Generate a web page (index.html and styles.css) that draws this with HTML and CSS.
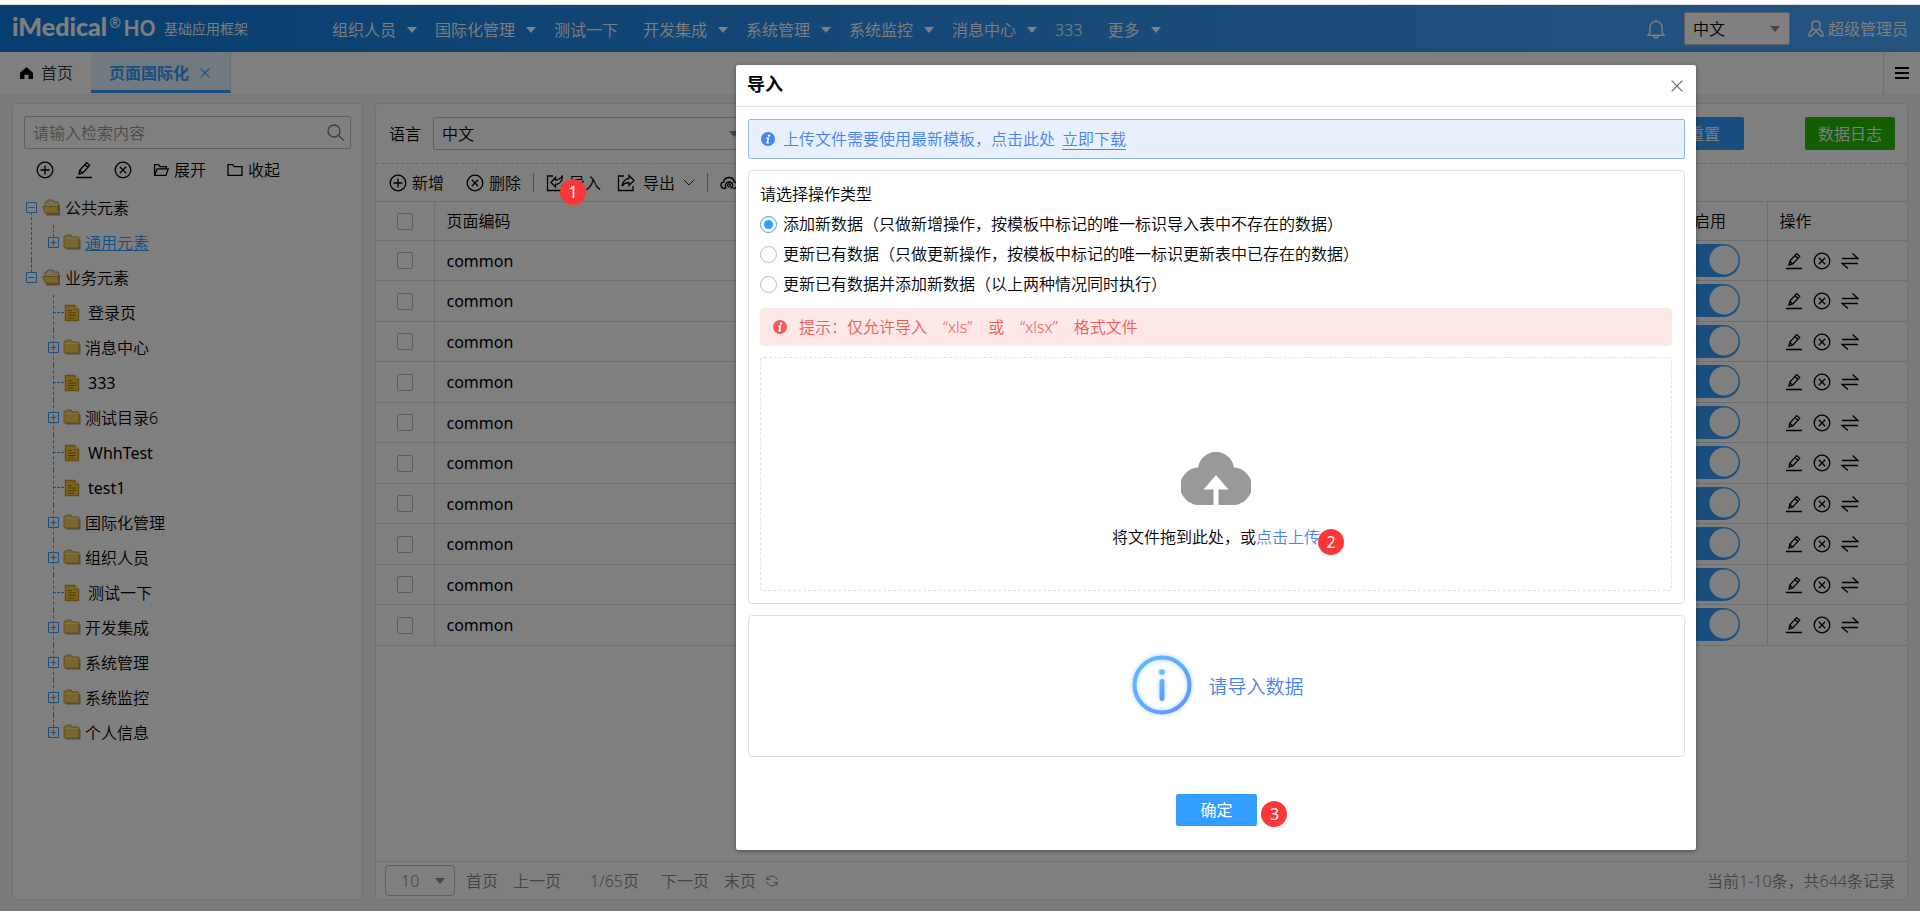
FILE: index.html
```html
<!DOCTYPE html>
<html lang="zh-CN">
<head>
<meta charset="utf-8">
<title>页面国际化</title>
<link rel="stylesheet" href="styles.css">
</head>
<body>
<svg class="sprite" aria-hidden="true">
  <symbol id="add" viewBox="0 0 18 18"><circle cx="9" cy="9" r="7.8"/><path d="M9 4.5v9M4.5 9h9"/></symbol>
  <symbol id="edit" viewBox="0 0 18 18"><path d="M1 16.5h16M4 13l.7-3.8L11.6 1.6l3.1 2.8-6.9 7.6L4 13zM9.8 3.6l3.1 2.8M4.7 9.2l3.1 2.8"/></symbol>
  <symbol id="del" viewBox="0 0 18 18"><circle cx="9" cy="9" r="7.8"/><path d="M5.8 5.8l6.4 6.4M12.2 5.8l-6.4 6.4"/></symbol>
  <symbol id="swap" viewBox="0 0 18 18"><path d="M1 6.5h16l-5.5-5M17 11.5H1l6 5"/></symbol>
  <symbol id="open" viewBox="0 0 16 16"><path d="M1.6 13.4V2.6h4l1.4 2h6.4v2.2M1.6 13.4l2.6-6.6h11l-2.2 6.6H1.6z"/></symbol>
  <symbol id="closed" viewBox="0 0 16 16"><path d="M1 2.6h4.6l1.6 2H15v8.8H1z"/></symbol>
  <symbol id="plus" viewBox="0 0 11 11"><path d="M.5.5h10v10H.5zM2.5 5.5h6M5.5 2.5v6"/></symbol>
  <symbol id="minus" viewBox="0 0 11 11"><path d="M.5.5h10v10H.5zM2.5 5.5h6"/></symbol>
  <symbol id="folder" viewBox="0 0 18 17"><path d="M3 14.5h13.5v-9" fill="none" stroke="#a89878" stroke-width="2"/><path d="M1 4.5V3q0-1 1-1h1l1-1h4l1.500 2H15q1 0 1 1v9q0 1-1 1H2q-1 0-1-1z" fill="#f2ce5c" stroke="#c49a3c"/><path d="M2 4.500h13" stroke="#ffe69a"/></symbol>
  <symbol id="folder-open" viewBox="0 0 19 17"><path d="M4 15.500h13V6" fill="none" stroke="#a89878" stroke-width="2"/><path d="M3 13V4q0-1 1-1h1l1-2h5l1 2h3.500q1 0 1 1v10H4z" fill="#efe0b0" stroke="#b3924a"/><path d="M.8 7.500h14.700l1.200 6.500H3z" fill="#f2ce5c" stroke="#c49a3c"/></symbol>
  <symbol id="file" viewBox="0 0 16 18"><path d="M1.500 1.500h9l4 4v11h-13z" fill="#f5c93e" stroke="#cf9b1e" stroke-width="1.400"/><path d="M10.500 1.500v4h4" fill="#fff0b8" stroke="#cf9b1e"/><path d="M4 6.500h4M4 9h8M4 11.500h8M4 14h6" stroke="#a87800"/></symbol>
  <symbol id="info" viewBox="0 0 14 14"><circle cx="7" cy="7" r="7" fill="currentColor"/><circle cx="8.100" cy="3.600" r="1.200" fill="#fff"/><path d="M5.300 6.300h2L6.300 10.800h1.500" fill="none" stroke="#fff" stroke-width="1.500"/></symbol>
  <symbol id="in" viewBox="0 0 18 18"><path d="M7 2H1.500v14.500h14.500V11"/><path d="M5 8.500L9.500 3.500v2.700q4.500-.4 7-4.700-.2 8.500-7 9v2.500z"/></symbol>
  <symbol id="out" viewBox="0 0 18 18"><path d="M7 2H1.500v14.500h14.500V12"/><path d="M17 6.500L12 1.500V4.300Q6.500 5 5 12q2.800-3.500 7-3.500v3z"/></symbol>
</svg>

<div class="app">
  <header class="topbar">
    <div class="brand"><span class="brand-name">iMedical</span><span class="brand-reg">®</span><span class="brand-ho">HO</span></div>
    <span class="brand-sub">基础应用框架</span>
    <nav class="menu">
      <a href="#" class="has-sub">组织人员</a>
      <a href="#" class="has-sub">国际化管理</a>
      <a href="#">测试一下</a>
      <a href="#" class="has-sub">开发集成</a>
      <a href="#" class="has-sub">系统管理</a>
      <a href="#" class="has-sub">系统监控</a>
      <a href="#" class="has-sub">消息中心</a>
      <a href="#">333</a>
      <a href="#" class="has-sub">更多</a>
    </nav>
    <div class="account">
      <button class="plain" aria-label="通知"><svg class="bell" viewBox="0 0 18 20"><path d="M1 16.200h16c-1.500-1.500-2-3-2-5.200V8.500C15 5 12.500 2.500 9 2.500S3 5 3 8.500V11c0 2.200-.5 3.700-2 5.200zM7 17q0 2 2 2t2-2M9 2.500V.6"/></svg></button>
      <select class="select lang" aria-label="界面语言"><option>中文</option></select>
      <a href="#" class="user"><svg viewBox="0 0 16 17"><path d="M8 .9c2.700 0 4.200 1.800 4.200 4.300S10.500 10 8 10 3.800 7.700 3.800 5.200 5.300.9 8 .9zM5 9.300C2.500 10.300 1.200 12.500 1 16h2.500L8 11l4.500 5H15c-.2-3.500-1.500-5.700-4-6.700"/></svg>超级管理员</a>
    </div>
  </header>

  <div class="tabs">
    <a href="#" class="tab home"><svg viewBox="0 0 14 13"><path d="M7 0L0 6.300V13h4.800V8.500h4.400V13H14V6.300z"/></svg>首页</a>
    <a href="#" class="tab active">页面国际化<svg viewBox="0 0 10 10"><path d="M.7.7l8.600 8.600M9.300.7L.7 9.300"/></svg></a>
    <button class="plain tab-menu" aria-label="标签菜单"><svg viewBox="0 0 14 12"><path d="M0 1h14M0 6h14M0 11h14"/></svg></button>
  </div>

  <main class="workspace">
    <aside class="panel side">
      <div class="search">
        <input type="text" placeholder="请输入检索内容" aria-label="检索内容">
        <svg viewBox="0 0 18 18"><circle cx="7" cy="7" r="6"/><path d="M11.500 11.500l5.500 5"/></svg>
      </div>
      <div class="side-tools">
        <button class="plain" aria-label="新增"><svg class="ic"><use href="#add"/></svg></button>
        <button class="plain" aria-label="编辑"><svg class="ic"><use href="#edit"/></svg></button>
        <button class="plain" aria-label="删除"><svg class="ic"><use href="#del"/></svg></button>
        <button class="plain"><svg class="ic sm"><use href="#open"/></svg>展开</button>
        <button class="plain"><svg class="ic sm"><use href="#closed"/></svg>收起</button>
      </div>
      <ul class="tree">
        <li>
          <div class="node"><svg class="exp"><use href="#minus"/></svg><svg class="fo"><use href="#folder-open"/></svg><span>公共元素</span></div>
          <ul>
            <li><div class="node"><svg class="exp"><use href="#plus"/></svg><svg class="fc"><use href="#folder"/></svg><a href="#">通用元素</a></div></li>
          </ul>
        </li>
        <li>
          <div class="node"><svg class="exp"><use href="#minus"/></svg><svg class="fo"><use href="#folder-open"/></svg><span>业务元素</span></div>
          <ul>
            <li><div class="node leaf"><i></i><svg class="fi"><use href="#file"/></svg><span>登录页</span></div></li>
            <li><div class="node"><svg class="exp"><use href="#plus"/></svg><svg class="fc"><use href="#folder"/></svg><span>消息中心</span></div></li>
            <li><div class="node leaf"><i></i><svg class="fi"><use href="#file"/></svg><span class="latin">333</span></div></li>
            <li><div class="node"><svg class="exp"><use href="#plus"/></svg><svg class="fc"><use href="#folder"/></svg><span>测试目录6</span></div></li>
            <li><div class="node leaf"><i></i><svg class="fi"><use href="#file"/></svg><span class="latin">WhhTest</span></div></li>
            <li><div class="node leaf"><i></i><svg class="fi"><use href="#file"/></svg><span class="latin">test1</span></div></li>
            <li><div class="node"><svg class="exp"><use href="#plus"/></svg><svg class="fc"><use href="#folder"/></svg><span>国际化管理</span></div></li>
            <li><div class="node"><svg class="exp"><use href="#plus"/></svg><svg class="fc"><use href="#folder"/></svg><span>组织人员</span></div></li>
            <li><div class="node leaf"><i></i><svg class="fi"><use href="#file"/></svg><span>测试一下</span></div></li>
            <li><div class="node"><svg class="exp"><use href="#plus"/></svg><svg class="fc"><use href="#folder"/></svg><span>开发集成</span></div></li>
            <li><div class="node"><svg class="exp"><use href="#plus"/></svg><svg class="fc"><use href="#folder"/></svg><span>系统管理</span></div></li>
            <li><div class="node"><svg class="exp"><use href="#plus"/></svg><svg class="fc"><use href="#folder"/></svg><span>系统监控</span></div></li>
            <li><div class="node"><svg class="exp"><use href="#plus"/></svg><svg class="fc"><use href="#folder"/></svg><span>个人信息</span></div></li>
          </ul>
        </li>
      </ul>
    </aside>

    <section class="panel content">
      <div class="query">
        <label for="lang">语言</label>
        <select id="lang" class="select wide"><option>中文</option></select>
        <button class="btn blue reset">重置</button>
        <button class="btn green">数据日志</button>
      </div>
      <div class="tools">
        <button class="plain"><svg class="ic"><use href="#add"/></svg>新增</button>
        <button class="plain"><svg class="ic"><use href="#del"/></svg>删除</button>
        <span class="sep"></span>
        <button class="plain marked"><svg class="ic"><use href="#in"/></svg>导入</button>
        <button class="plain"><svg class="ic"><use href="#out"/></svg>导出<svg class="chev" viewBox="0 0 12 7"><path d="M.7.7L6 6 11.300.7"/></svg></button>
        <span class="sep"></span>
        <button class="plain" aria-label="同步"><svg class="ic" viewBox="0 0 18 18"><path d="M5 14.500H4.500C2.500 14.300 1 13 1 11c0-1.700 1-2.800 2.700-3.100C4.200 4.800 6.300 3.500 9 3.500s4.800 1.300 5.300 4.400C16 8.200 17 9.300 17 11c0 2-1.500 3.300-3.500 3.500M6.300 14.800C5.300 13.500 5 12 5.600 10.500 6.300 8.700 7.600 8 9.200 8c2.200 0 3.500 1.500 3.500 3.200 0 1.500-.8 2.600-2.200 3.300"/><circle cx="9" cy="11.300" r="1.500"/></svg></button>
      </div>
      <table class="grid">
        <colgroup><col class="c-check"><col><col class="c-switch"><col class="c-ops"></colgroup>
        <thead><tr><th><input type="checkbox" aria-label="全选"></th><th>页面编码</th><th>启用</th><th>操作</th></tr></thead>
        <tbody>
          <tr><td><input type="checkbox" aria-label="选择"></td><td>common</td><td><input type="checkbox" class="switch" role="switch" aria-label="启用" checked></td><td><span class="ops"><button class="plain" aria-label="编辑"><svg class="ic"><use href="#edit"/></svg></button><button class="plain" aria-label="删除"><svg class="ic"><use href="#del"/></svg></button><button class="plain" aria-label="转换"><svg class="ic"><use href="#swap"/></svg></button></span></td></tr>
          <tr><td><input type="checkbox" aria-label="选择"></td><td>common</td><td><input type="checkbox" class="switch" role="switch" aria-label="启用" checked></td><td><span class="ops"><button class="plain" aria-label="编辑"><svg class="ic"><use href="#edit"/></svg></button><button class="plain" aria-label="删除"><svg class="ic"><use href="#del"/></svg></button><button class="plain" aria-label="转换"><svg class="ic"><use href="#swap"/></svg></button></span></td></tr>
          <tr><td><input type="checkbox" aria-label="选择"></td><td>common</td><td><input type="checkbox" class="switch" role="switch" aria-label="启用" checked></td><td><span class="ops"><button class="plain" aria-label="编辑"><svg class="ic"><use href="#edit"/></svg></button><button class="plain" aria-label="删除"><svg class="ic"><use href="#del"/></svg></button><button class="plain" aria-label="转换"><svg class="ic"><use href="#swap"/></svg></button></span></td></tr>
          <tr><td><input type="checkbox" aria-label="选择"></td><td>common</td><td><input type="checkbox" class="switch" role="switch" aria-label="启用" checked></td><td><span class="ops"><button class="plain" aria-label="编辑"><svg class="ic"><use href="#edit"/></svg></button><button class="plain" aria-label="删除"><svg class="ic"><use href="#del"/></svg></button><button class="plain" aria-label="转换"><svg class="ic"><use href="#swap"/></svg></button></span></td></tr>
          <tr><td><input type="checkbox" aria-label="选择"></td><td>common</td><td><input type="checkbox" class="switch" role="switch" aria-label="启用" checked></td><td><span class="ops"><button class="plain" aria-label="编辑"><svg class="ic"><use href="#edit"/></svg></button><button class="plain" aria-label="删除"><svg class="ic"><use href="#del"/></svg></button><button class="plain" aria-label="转换"><svg class="ic"><use href="#swap"/></svg></button></span></td></tr>
          <tr><td><input type="checkbox" aria-label="选择"></td><td>common</td><td><input type="checkbox" class="switch" role="switch" aria-label="启用" checked></td><td><span class="ops"><button class="plain" aria-label="编辑"><svg class="ic"><use href="#edit"/></svg></button><button class="plain" aria-label="删除"><svg class="ic"><use href="#del"/></svg></button><button class="plain" aria-label="转换"><svg class="ic"><use href="#swap"/></svg></button></span></td></tr>
          <tr><td><input type="checkbox" aria-label="选择"></td><td>common</td><td><input type="checkbox" class="switch" role="switch" aria-label="启用" checked></td><td><span class="ops"><button class="plain" aria-label="编辑"><svg class="ic"><use href="#edit"/></svg></button><button class="plain" aria-label="删除"><svg class="ic"><use href="#del"/></svg></button><button class="plain" aria-label="转换"><svg class="ic"><use href="#swap"/></svg></button></span></td></tr>
          <tr><td><input type="checkbox" aria-label="选择"></td><td>common</td><td><input type="checkbox" class="switch" role="switch" aria-label="启用" checked></td><td><span class="ops"><button class="plain" aria-label="编辑"><svg class="ic"><use href="#edit"/></svg></button><button class="plain" aria-label="删除"><svg class="ic"><use href="#del"/></svg></button><button class="plain" aria-label="转换"><svg class="ic"><use href="#swap"/></svg></button></span></td></tr>
          <tr><td><input type="checkbox" aria-label="选择"></td><td>common</td><td><input type="checkbox" class="switch" role="switch" aria-label="启用" checked></td><td><span class="ops"><button class="plain" aria-label="编辑"><svg class="ic"><use href="#edit"/></svg></button><button class="plain" aria-label="删除"><svg class="ic"><use href="#del"/></svg></button><button class="plain" aria-label="转换"><svg class="ic"><use href="#swap"/></svg></button></span></td></tr>
          <tr><td><input type="checkbox" aria-label="选择"></td><td>common</td><td><input type="checkbox" class="switch" role="switch" aria-label="启用" checked></td><td><span class="ops"><button class="plain" aria-label="编辑"><svg class="ic"><use href="#edit"/></svg></button><button class="plain" aria-label="删除"><svg class="ic"><use href="#del"/></svg></button><button class="plain" aria-label="转换"><svg class="ic"><use href="#swap"/></svg></button></span></td></tr>
        </tbody>
      </table>
      <footer class="pager">
        <select class="select size" aria-label="每页条数"><option>10</option></select>
        <a href="#">首页</a>
        <a href="#">上一页</a>
        <span class="page-no">1/65页</span>
        <a href="#">下一页</a>
        <a href="#">末页</a>
        <button class="plain" aria-label="刷新"><svg viewBox="0 0 12 12"><path d="M1 4.500C2 2 4 1 6 1c2.500 0 4.500 1.500 5 4M11 7.500C10 10 8 11 6 11c-2.500 0-4.500-1.500-5-4M1 1.500v3h3M11 10.500v-3H8"/></svg></button>
        <span class="total">当前1-10条，共644条记录</span>
      </footer>
    </section>
  </main>

  <div class="mask"></div>
  <b class="badge first">1</b>

  <div class="modal" role="dialog" aria-labelledby="dlg-title">
    <div class="modal-head">
      <h2 id="dlg-title">导入</h2>
      <button class="plain" aria-label="关闭"><svg viewBox="0 0 12 12"><path d="M.6.600l10.800 10.800M11.400.600L.6 11.400"/></svg></button>
    </div>
    <div class="modal-body">
      <div class="tip"><svg><use href="#info"/></svg><span>上传文件需要使用最新模板，点击此处</span><a href="#">立即下载</a></div>
      <div class="box form">
        <p>请选择操作类型</p>
        <label><input type="radio" name="mode" checked>添加新数据（只做新增操作，按模板中标记的唯一标识导入表中不存在的数据）</label>
        <label><input type="radio" name="mode">更新已有数据（只做更新操作，按模板中标记的唯一标识更新表中已存在的数据）</label>
        <label><input type="radio" name="mode">更新已有数据并添加新数据（以上两种情况同时执行）</label>
        <div class="warn"><svg><use href="#info"/></svg><span>提示：仅允许导入</span><span>“xls”</span><span>或</span><span>“xlsx”</span><span>格式文件</span></div>
        <div class="drop">
          <svg viewBox="0 0 70 53"><path d="M32.500 53V37.500H22.500L35 23l12.500 14.500H37.500V53H51a18.500 18.500 0 0 0 2-37.500A18.200 18.200 0 0 0 17 15.500 18.500 18.500 0 0 0 19 53z" fill="#999"/></svg>
          <p>将文件拖到此处，或<span class="pick"><a href="#">点击上传</a><b class="badge two">2</b></span></p>
        </div>
      </div>
      <div class="box result">
        <svg viewBox="0 0 66 66"><defs><linearGradient id="ring" x1="0" y1="0" x2="1" y2="1"><stop offset="0" stop-color="#5cc0ff"/><stop offset="1" stop-color="#6690ff"/></linearGradient><linearGradient id="stem" gradientUnits="userSpaceOnUse" x1="0" y1="18" x2="0" y2="50"><stop offset="0" stop-color="#5cc0ff"/><stop offset="1" stop-color="#6690ff"/></linearGradient></defs><circle cx="33" cy="33" r="27.500" fill="none" stroke="url(#ring)" stroke-width="4"/><circle cx="33" cy="20" r="2.800" fill="url(#stem)"/><rect x="30.600" y="27" width="4.800" height="22" rx="2.400" fill="url(#stem)"/></svg>
        <span>请导入数据</span>
      </div>
      <div class="actions"><span class="confirm"><button class="btn blue">确定</button><b class="badge three">3</b></span></div>
    </div>
  </div>
</div>
</body>
</html>
```
FILE: styles.css
```css
* { box-sizing: border-box; }
body {
  margin: 0;
  height: 100vh;
  padding: 4px 0 1px;
  background: #fff;
  font: 350 16px/24px "Noto Sans", "Noto Sans CJK SC", sans-serif;
  color: #000;
}
button, input, select { font: inherit; color: inherit; }
a { color: inherit; text-decoration: none; }
p, h2, ul { margin: 0; padding: 0; }
ul { list-style: none; }
svg { display: block; flex: none; fill: none; }
.sprite { position: absolute; width: 0; height: 0; }
.plain { display: flex; align-items: center; border: 0; padding: 0; background: none; cursor: pointer; }
.ic { width: 18px; height: 18px; stroke: currentColor; stroke-width: 1.3; }
.ic.sm { width: 16px; height: 16px; }
.latin { font-weight: 400; }

.app {
  position: relative;
  display: flex;
  flex-direction: column;
  height: 100%;
  border-top: 1px solid #ddd;
}

/* header */
.topbar {
  display: flex;
  align-items: center;
  flex: none;
  height: 47px;
  padding: 0 12px;
  background: linear-gradient(90deg, #107ddf, #4ba8ff);
  color: #fff;
}
.brand { display: flex; align-items: baseline; width: 152px; padding-bottom: 3px; font: 900 25px/28px Lato, sans-serif; }
.brand-reg { margin: 0 3px 0 2px; font: 14px/22px "Noto Sans", sans-serif; align-self: flex-start; }
.brand-ho { font: 600 21px/28px Inter, sans-serif; }
.brand-sub { width: 168px; font-size: 14px; padding-top: 1px; }
.menu { display: flex; flex: 1; padding-top: 3px; }
.menu a { display: flex; align-items: center; margin-right: 25px; }
.menu .has-sub { margin-right: 18px; }
.has-sub::after {
  content: "";
  margin-left: 11px;
  border: solid transparent;
  border-width: 6px 5px 0;
  border-top-color: #fff;
}
.account { display: flex; align-items: center; }
.bell { width: 18px; height: 20px; margin-right: 19px; stroke: #fff; stroke-width: 1.4; }
.select {
  appearance: none;
  height: 33px;
  padding: 0 8px;
  border: 1px solid #c0c0c0;
  border-radius: 2px;
  background: #fff url("data:image/svg+xml,%3Csvg xmlns='http://www.w3.org/2000/svg' width='10' height='6'%3E%3Cpath d='M0 0h10L5 6z' fill='%23888'/%3E%3C/svg%3E") no-repeat right 9px center;
}
.lang { width: 106px; margin-right: 18px; color: #000; }
.user { display: flex; align-items: center; gap: 4px; }
.user svg { width: 16px; height: 17px; stroke: #fff; stroke-width: 1.5; }

/* tabs */
.tabs {
  display: flex;
  flex: none;
  height: 42px;
  background: #fff;
  box-shadow: 0 1px 4px rgba(0, 0, 0, .2);
}
.tab { display: flex; align-items: center; }
.home { width: 91px; padding-left: 20px; gap: 8px; color: #333; }
.home svg { width: 13px; height: 12px; fill: #000; }
.active {
  height: 41px;
  padding: 3px 20px 0 18px;
  gap: 11px;
  background: #e5f2ff;
  border-bottom: 3px solid #339eff;
  border-right: 1px solid #ddd;
  font-weight: 700;
  color: #339eff;
}
.active svg { width: 10px; height: 10px; stroke: #339eff; stroke-width: 1.2; }
.tab-menu { width: 37px; margin-left: auto; padding-left: 11px; border-left: 1px solid #ddd; }
.tab-menu svg { width: 14px; height: 12px; stroke: #000; stroke-width: 2; }

/* workspace */
.workspace {
  display: flex;
  flex: 1;
  gap: 12px;
  min-height: 0;
  padding: 9px 12px 11px;
  background: #f5f5f5;
}
.panel { border: 1px solid #e2e2e2; border-radius: 4px; background: #fff; }
.side { width: 351px; padding: 12px 11px; }
.search { display: flex; align-items: center; height: 33px; padding: 0 5px 0 8px; border: 1px solid #c0c0c0; border-radius: 2px; }
.search input { flex: 1; min-width: 0; padding: 0; border: 0; outline: 0; background: none; }
.search input::placeholder { color: #999; }
.search svg { width: 18px; height: 18px; stroke: #777; stroke-width: 1.3; }
.side-tools { display: flex; padding: 9px 12px 8px; gap: 21px; }
.side-tools .plain { gap: 5px; }

/* tree */
.tree { padding-left: 2px; }
.tree li { position: relative; }
.tree ul { padding-left: 22px; }
.node { display: flex; align-items: center; height: 35px; }
.node a { color: #339eff; text-decoration: underline; }
.exp { position: relative; width: 11px; height: 11px; margin-right: 5px; stroke: #339eff; background: #fff; }
.fo { width: 19px; height: 17px; margin-right: 4px; }
.tree ul .exp { margin-right: 4px; }
.fc { width: 18px; height: 17px; margin-right: 4px; }
.fi { width: 16px; height: 18px; margin-right: 8px; }
.leaf i { width: 11px; margin: 0 0 0 5px; border-top: 1px dashed #339eff; }
.tree li::before {
  content: "";
  position: absolute;
  top: 0;
  bottom: 0;
  left: 5px;
  border-left: 1px dashed #339eff;
}
.tree > li:first-child::before { top: 17px; }
.tree li:last-child::before { bottom: auto; height: 17px; }

/* grid panel */
.content { display: flex; flex: 1; flex-direction: column; min-width: 0; }
.query { display: flex; align-items: center; padding: 13px 12px; border-bottom: 1px dashed #d0d0d0; }
.query label { margin: 0 12px 0 1px; }
.wide { width: 316px; }
.btn { height: 33px; padding: 0 12px; border: 0; border-radius: 2px; color: #fff; cursor: pointer; }
.blue { background: #339eff; padding: 0 24px; }
.green { background: #28ba05; padding: 0 13px; }
.reset { margin: 0 61px 0 auto; }
.tools { display: flex; align-items: center; height: 37px; padding: 0 13px; }
.tools .plain { gap: 5px; margin-right: 22px; }
.tools .plain:nth-child(2), .tools .plain:nth-child(5) { margin-right: 12px; }
.tools .marked { margin-right: 16px; }
.tools .sep { height: 19px; margin-right: 12px; border-left: 1px solid #999; }
.tools .plain:nth-child(5) { gap: 8px; }
.chev { width: 12px; height: 7px; stroke: #333; }

.grid { width: 100%; border-collapse: collapse; table-layout: fixed; border-top: 1px solid #ddd; border-bottom: 1px solid #ddd; }
.c-check { width: 58px; }
.c-switch { width: 85px; }
.c-ops { width: 140px; }
.grid th, .grid td { height: 40px; padding: 0 12px; border: solid #ddd; border-width: 1px 0 0; text-align: left; font-weight: inherit; }
.grid td { font-weight: 400; }
.grid tbody tr:nth-child(even) td { height: 41px; }
.grid th { height: 39px; }
.grid th:first-child, .grid td:first-child { padding: 0; text-align: center; border-right-width: 1px; }
.grid th:last-child, .grid td:last-child { border-left-width: 1px; }
.grid td:nth-child(3) { padding: 0 0 1px 1px; }
.grid input { display: block; margin: 0 auto; appearance: none; width: 16px; height: 17px; border: 1px solid #bbb; border-radius: 2px; background: #fff; }
.grid .switch { display: block; width: 57px; height: 33px; margin: 0; padding: 0 2px; border: 0; border-radius: 17px; background: radial-gradient(circle at 41px 16px, #fff 14px, #339eff 15px); }
.ops { display: flex; gap: 10px; padding-left: 5px; }

.pager { display: flex; align-items: center; height: 38px; margin-top: auto; padding: 0 12px 0 9px; border-top: 1px solid #ddd; color: #888; }
.size { width: 70px; height: 31px; margin-right: 11px; padding: 0 15px; border-radius: 4px; }
.pager a { margin-right: 15px; }
.page-no { margin: 0 22px 0 14px; }
.pager svg { width: 12px; height: 12px; margin-left: -5px; stroke: #888; }
.total { margin-left: auto; }

/* dialog */
.mask { position: absolute; inset: 0; background: rgba(0, 0, 0, .5); }
.badge {
  position: absolute;
  width: 26px;
  height: 26px;
  border-radius: 50%;
  background: #fc3737;
  color: #fff;
  font-weight: 400;
  line-height: 26px;
  text-align: center;
}
.first { left: 560px; top: 174px; }
.two { left: 62px; top: 4px; }
.three { left: 85px; top: 7px; }
.modal {
  position: absolute;
  left: 736px;
  top: 60px;
  width: 960px;
  border-radius: 2px;
  background: #fff;
  box-shadow: 0 1px 4px rgba(0, 0, 0, .4);
}
.modal-head { display: flex; align-items: center; justify-content: space-between; height: 42px; padding: 0 13px 0 11px; border-bottom: 1px solid #ddd; }
.modal-head h2 { padding-bottom: 3px; font-size: 18px; font-weight: 700; }
.modal-head svg { width: 12px; height: 12px; stroke: #666; stroke-width: 1.2; }
.modal-body { display: flex; flex-direction: column; gap: 11px; padding: 12px 11px 24px 12px; }
.tip { display: flex; align-items: center; height: 40px; padding: 0 12px; border: 1px solid #94b6f8; border-radius: 2px; background: #e8effd; color: #4683f5; }
.tip svg, .warn svg { width: 14px; height: 14px; margin-right: 8px; }
.tip a { margin-left: 7px; line-height: 20px; border-bottom: 1px solid #4683f5; }
.box { border: 1px solid #e0e0e0; border-radius: 4px; }
.form { display: flex; flex-direction: column; padding: 11px 12px 12px 11px; }
.form label { display: flex; align-items: center; margin-top: 6px; gap: 6px; }
.form input { appearance: none; width: 17px; height: 17px; margin: 0; border: 1px solid #bbb; border-radius: 50%; background: #fff; }
.form input:checked { border-color: #339eff; background: radial-gradient(circle, #339eff 4px, #fff 5px); }
.warn { display: flex; align-items: center; height: 38px; margin-top: 12px; padding: 0 13px; border-radius: 4px; gap: 16px; background: #fde8e8; color: #f45b5b; }
.warn svg { margin-right: -4px; }
.drop { display: flex; flex-direction: column; align-items: center; margin-top: 11px; padding: 94px 0 41px; border: 1px dashed #dce3ee; border-radius: 4px; }
.drop svg { width: 70px; height: 53px; margin-bottom: 20px; }
.pick, .confirm { position: relative; display: inline-block; }
.pick a { color: #4683f5; }
.result { display: flex; align-items: center; justify-content: center; height: 142px; gap: 13px; padding-bottom: 2px; font-size: 19px; color: #4683f5; }
.result svg { width: 66px; height: 66px; filter: drop-shadow(0 0 2px #9cd0ff); }
.result span { padding-top: 4px; }
.actions { display: flex; justify-content: center; padding-top: 26px; }
.actions .btn { height: 32px; font-weight: 400; }
```
